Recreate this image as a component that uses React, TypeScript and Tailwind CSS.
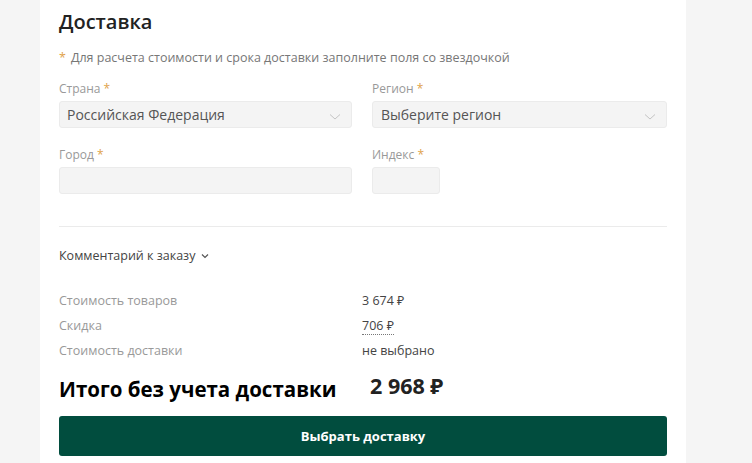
export default function App() {
  const f = { fontFamily: '"Open Sans", "Noto Sans", sans-serif' };
  const chevron = (
    <svg width="12" height="8" viewBox="0 0 12 8" className="absolute right-[10px] top-[11px]">
      <path d="M1 1.5 L6 6 L11 1.5" fill="none" stroke="#c4c4c4" strokeWidth="1" />
    </svg>
  );
  return (
    <div className="w-[752px] h-[463px] bg-[#f5f5f5] overflow-hidden text-[#333]" style={f}>
      <div className="ml-[40px] w-[646px] h-full bg-white px-[19px] pt-[8px]">
        <h2 className="text-[20px] font-semibold text-[#222] leading-[28px]">Доставка</h2>
        <p className="mt-[13px] text-[12.5px] text-[#777] leading-[18px]">
          <span className="text-[#e0a24a] mr-[5px]">*</span>Для расчета стоимости и срока доставки заполните поля со звездочкой
        </p>
        <div className="grid grid-cols-[293px_295px] gap-x-[20px] mt-[13px]">
          <div>
            <div className="text-[12px] text-[#999] leading-[18px]">Страна <span className="text-[#e0a24a]">*</span></div>
            <div className="relative mt-[3px] h-[27px] bg-[#f4f4f4] border border-[#ebebeb] rounded-[3px] px-[7px] text-[14px] leading-[25px] text-[#555]">
              Российская Федерация{chevron}
            </div>
          </div>
          <div>
            <div className="text-[12px] text-[#999] leading-[18px]">Регион <span className="text-[#e0a24a]">*</span></div>
            <div className="relative mt-[3px] h-[27px] bg-[#f4f4f4] border border-[#ebebeb] rounded-[3px] px-[8px] text-[14px] leading-[25px] text-[#555]">
              Выберите регион{chevron}
            </div>
          </div>
          <div className="mt-[18px]">
            <div className="text-[12px] text-[#999] leading-[18px]">Город <span className="text-[#e0a24a]">*</span></div>
            <div className="mt-[3px] h-[27px] bg-[#f4f4f4] border border-[#ebebeb] rounded-[3px]" />
          </div>
          <div className="mt-[18px]">
            <div className="text-[12px] text-[#999] leading-[18px]">Индекс <span className="text-[#e0a24a]">*</span></div>
            <div className="mt-[3px] w-[68px] h-[27px] bg-[#f4f4f4] border border-[#ebebeb] rounded-[3px]" />
          </div>
        </div>
        <div className="mt-[32px] border-t border-[#ebebeb]" />
        <div className="mt-[20px] flex items-center gap-[6px] text-[12.5px] text-[#444] leading-[18px]">
          Комментарий к заказу
          <svg width="8" height="6" viewBox="0 0 8 6"><path d="M1 1.5 L4 4.5 L7 1.5" fill="none" stroke="#555" strokeWidth="1.2" /></svg>
        </div>
        <div className="mt-[27px] grid grid-cols-[303px_1fr] gap-y-[7px] text-[12.5px] leading-[18px]">
          <div className="text-[#999]">Стоимость товаров</div>
          <div className="text-[#444]">3 674 ₽</div>
          <div className="text-[#999]">Скидка</div>
          <div><span className="text-[#444] border-b border-dotted border-[#777]">706 ₽</span></div>
          <div className="text-[#999]">Стоимость доставки</div>
          <div className="text-[#444]">не выбрано</div>
        </div>
        <div className="mt-[13px] flex items-baseline">
          <div className="w-[311px] text-[20.5px] font-bold text-black leading-[30px]">Итого без учета доставки</div>
          <div className="text-[21.5px] font-bold text-[#222] relative top-[-3px]">2 968 ₽</div>
        </div>
        <button className="mt-[11px] w-full h-[40px] bg-[#014d3e] rounded-[3px] text-white text-[13px] font-bold">
          Выбрать доставку
        </button>
      </div>
    </div>
  );
}
